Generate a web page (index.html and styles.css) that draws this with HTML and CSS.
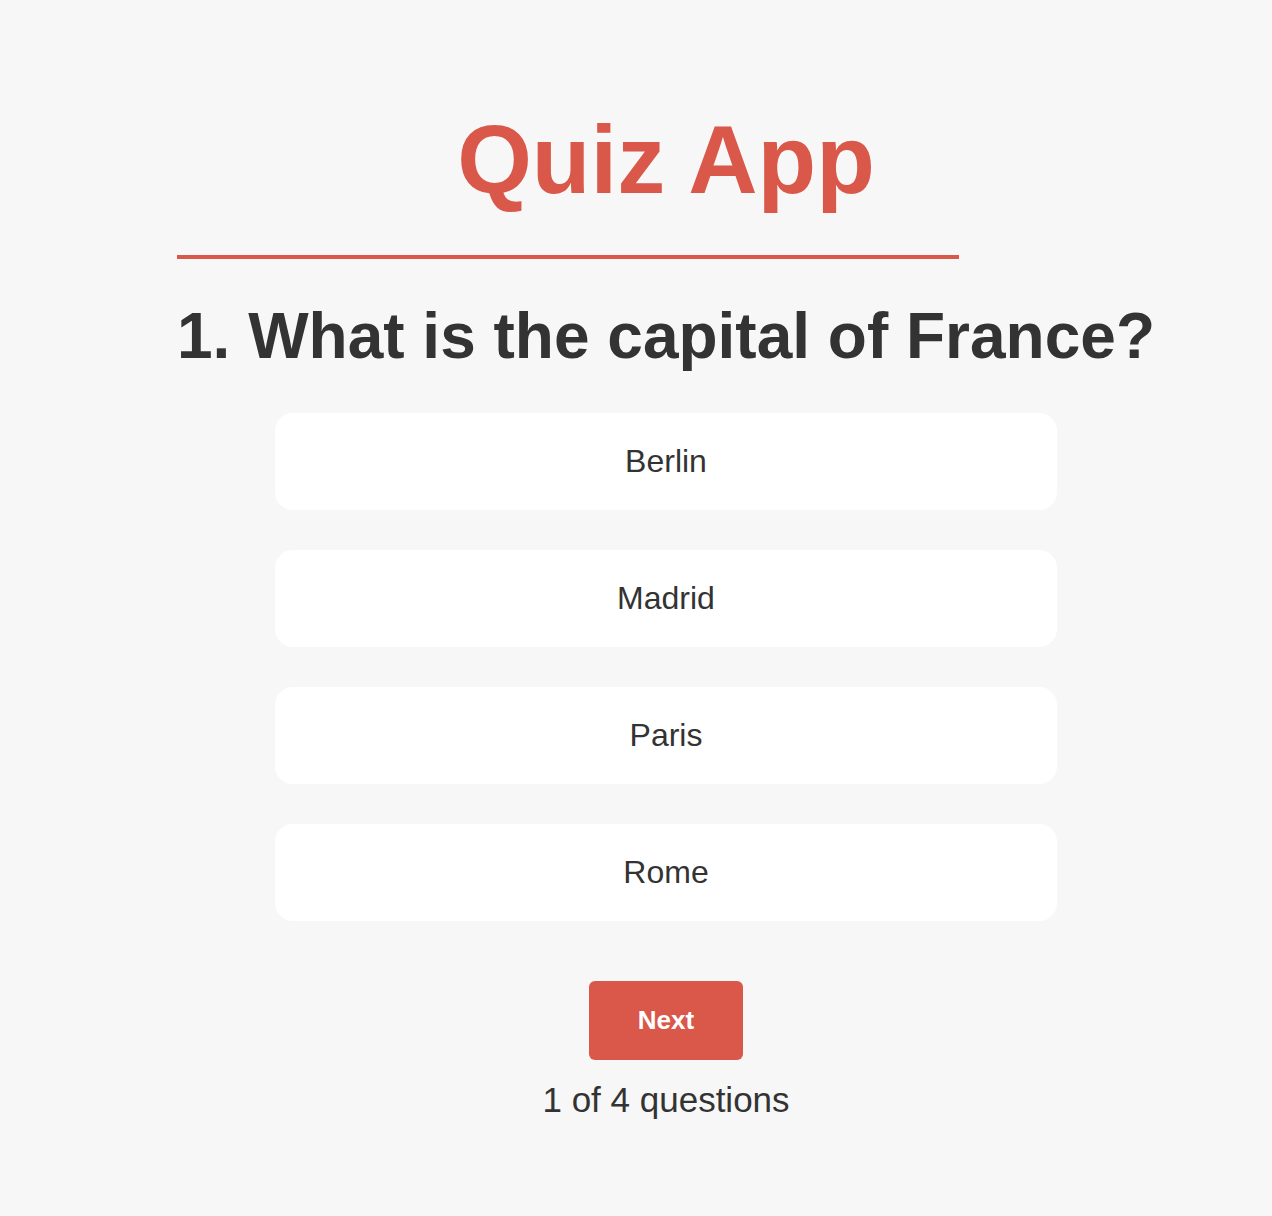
FILE: index.html
```html
<!DOCTYPE html>
<html lang="en">
<head>
<meta charset="utf-8">
<title>Quiz App</title>
<link rel="stylesheet" href="styles.css">
</head>
<body>
<main class="app">
  <h1 class="title">Quiz App</h1>
  <hr class="divider">
  <h2 class="question">1. What is the capital of France?</h2>
  <div class="options">
    <button class="option">Berlin</button>
    <button class="option">Madrid</button>
    <button class="option">Paris</button>
    <button class="option">Rome</button>
  </div>
  <div class="controls">
    <button class="next">Next</button>
    <p class="progress">1 of 4 questions</p>
  </div>
</main>
</body>
</html>
```
FILE: styles.css
```css
html, body {
  margin: 0;
  background: #f7f7f7;
}
body {
  padding-left: 60px;
  font-family: "Liberation Sans", Arial, sans-serif;
  color: #333333;
}
.app {
  width: 978px;
  margin: 0 auto;
  padding-top: 105px;
  display: flex;
  flex-direction: column;
}
.title {
  margin: 0;
  font-size: 96px;
  font-weight: bold;
  line-height: normal;
  color: #d95849;
  text-align: center;
}
.divider {
  width: 80%;
  height: 4px;
  margin: 40px 0 0 0;
  border: 0;
  background: #d95849;
  align-self: flex-start;
}
.question {
  margin: 40px 0 0 0;
  font-size: 64px;
  font-weight: bold;
  line-height: normal;
  text-align: center;
  white-space: nowrap;
  color: #333333;
}
.options {
  margin-top: 40px;
  display: flex;
  flex-direction: column;
  align-items: center;
  gap: 40px;
}
.option {
  width: 80%;
  padding: 30px 0;
  border: 0;
  border-radius: 18px;
  background: #ffffff;
  font-family: inherit;
  font-size: 32px;
  line-height: normal;
  color: #333333;
  text-align: center;
}
.controls {
  margin-top: 60px;
  display: flex;
  flex-direction: column;
  align-items: center;
}
.next {
  padding: 24px 49px;
  border: 0;
  border-radius: 6px;
  background: #d95849;
  color: #ffffff;
  font-family: inherit;
  font-size: 26px;
  font-weight: bold;
  line-height: normal;
}
.progress {
  margin: 20px 0 0 0;
  font-size: 35px;
  line-height: normal;
  color: #333333;
}
```
